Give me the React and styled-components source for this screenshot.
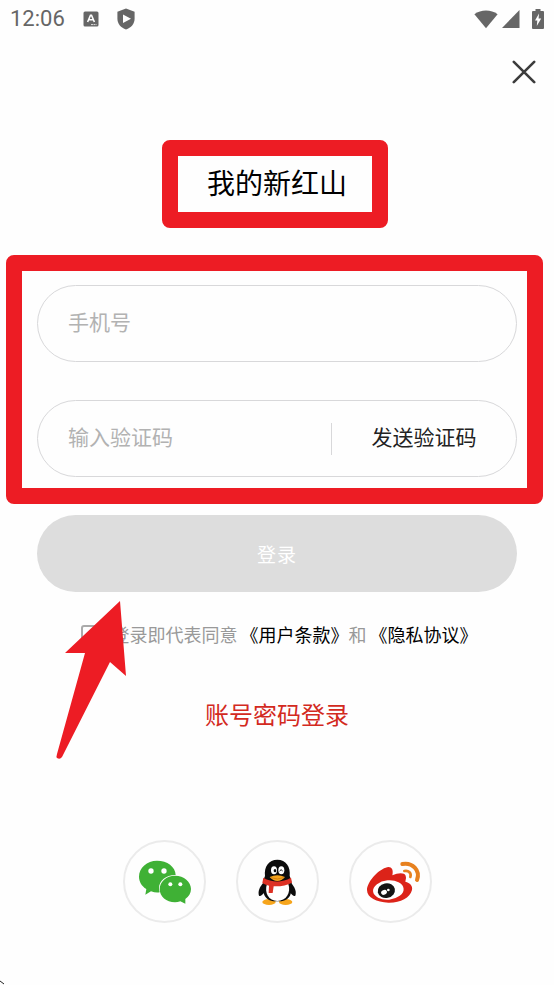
import React, { useState } from 'react';
import styled, { createGlobalStyle } from 'styled-components';

const RED = '#ed1c24';

const GlobalStyle = createGlobalStyle`
    * {
        box-sizing: border-box;
    }

    body {
        margin: 0;
        background: #fefefe;
        font-family: Roboto, 'Noto Sans CJK SC', sans-serif;
    }

    button, input {
        font-family: inherit;
    }
`;

const Page = styled.div`
    position: relative;
    min-height: 100vh;
    display: flex;
    flex-direction: column;
    overflow: hidden;
`;

const StatusBar = styled.div`
    height: 38px;
    padding: 0 10px;
    display: flex;
    align-items: center;
    justify-content: space-between;
    color: #666;
`;

const StatusGroup = styled.div`
    display: flex;
    align-items: center;
    gap: ${({ $gap }) => $gap}px;
`;

const Clock = styled.span`
    font-size: 22px;
    line-height: 26px;
`;

const Header = styled.header`
    display: flex;
    justify-content: flex-end;
    padding: 14px 10px 0;
`;

const CloseButton = styled.button`
    width: 40px;
    height: 40px;
    padding: 0;
    border: 0;
    background: none;
    display: flex;
    align-items: center;
    justify-content: center;
    cursor: pointer;
`;

const Title = styled.h1`
    position: relative;
    align-self: center;
    margin: 73px 0 0;
    font-size: 28px;
    line-height: 40px;
    font-weight: 400;
    color: #000;
`;

// red marker frame drawn over a block
const Highlight = styled.div`
    position: absolute;
    inset: ${({ $inset }) => $inset};
    border: 16px solid ${RED};
    border-radius: 8px;
    pointer-events: none;
`;

const Form = styled.form`
    margin: 80px 37px 0;
    display: flex;
    flex-direction: column;
    gap: 38px;
`;

const Fields = styled.div`
    position: relative;
    display: flex;
    flex-direction: column;
    gap: 38px;
`;

const Field = styled.div`
    height: 77px;
    display: flex;
    align-items: center;
    border: 1px solid #d8d8da;
    border-radius: 39px;
    overflow: hidden;
`;

const TextInput = styled.input`
    flex: 1;
    min-width: 0;
    height: 100%;
    padding: 0 30px 2px;
    border: 0;
    outline: 0;
    background: none;
    font-size: 21px;
    color: #222;

    &::placeholder {
        color: #b2b2b2;
        opacity: 1;
    }
`;

const SendCode = styled.button`
    flex: 0 0 185px;
    height: 32px;
    padding: 0 0 2px;
    border: 0;
    border-left: 1px solid #d8d8da;
    background: none;
    font-size: 21px;
    line-height: 30px;
    color: #222;
    cursor: pointer;
`;

const Submit = styled.button`
    height: 77px;
    border: 0;
    border-radius: 39px;
    background: #ddd;
    color: #fff;
    font-size: 19px;
    letter-spacing: 1px;
`;

const Terms = styled.div`
    position: relative;
    align-self: center;
    margin-top: 32px;
    padding-left: 4px;
    display: flex;
    align-items: center;
    font-size: 18px;
    line-height: 24px;
    color: #999;
    white-space: nowrap;
`;

const Checkbox = styled.input`
    appearance: none;
    width: 22px;
    height: 22px;
    margin: 0 9px 0 0;
    border: 2px solid #aaa;
    border-radius: 3px;

    &:checked {
        background: #999;
    }
`;

const TermsLink = styled.a`
    margin-left: 3px;
    color: #000;
    text-decoration: none;
`;

const ArrowSvg = styled.svg`
    position: absolute;
    left: -21px;
    top: -24px;
    pointer-events: none;
`;

const PasswordLogin = styled.a`
    align-self: center;
    margin-top: 50px;
    font-size: 24px;
    line-height: 36px;
    color: #d32a1e;
    text-decoration: none;
`;

const Social = styled.div`
    margin-top: 106px;
    display: flex;
    justify-content: center;
    gap: 30px;
`;

const SocialButton = styled.button`
    width: 83px;
    height: 83px;
    padding: 0;
    border: 2px solid #ebebeb;
    border-radius: 50%;
    background: none;
    display: flex;
    align-items: center;
    justify-content: center;
    cursor: pointer;
`;

const CornerMark = styled.svg`
    position: absolute;
    left: 0;
    bottom: 0;
`;

const BadgeIcon = () => (
    <svg width="16" height="16" viewBox="0 0 16 16">
        <rect x="0.5" y="0.5" width="15" height="15" rx="1.5" fill="#666" />
        <path d="M4.6 11 L7.5 4.2 H8.5 L11.4 11 M5.8 8.8 H10.2" fill="none" stroke="#fff" strokeWidth="1.6" />
        <path d="M8 13.6 H13.5" stroke="#ddd" strokeWidth="1" strokeDasharray="2 0.5" />
    </svg>
);

const ShieldIcon = () => (
    <svg width="18" height="22" viewBox="0 0 18 22">
        <path d="M9 0.4 L17.6 3.7 V10.5 C17.6 15.8 14 20 9 21.4 C4 20 0.4 15.8 0.4 10.5 V3.7 Z" fill="#666" />
        <path d="M6 6.5 L14 10.8 L6 15 Z" fill="#fff" />
    </svg>
);

const WifiIcon = () => (
    <svg width="24" height="19" viewBox="0 0 24 19">
        <path d="M0.4 4.2 C7 -0.8 17 -0.8 23.6 4.2 L12 18.2 Z" fill="#666" />
    </svg>
);

const SignalIcon = () => (
    <svg width="18" height="18" viewBox="0 0 18 18">
        <path d="M17.5 0 V18 H0 Z" fill="#666" />
    </svg>
);

const BatteryIcon = () => (
    <svg width="12" height="20" viewBox="0 0 12 20">
        <path d="M3.5 0 H8.5 V2 H11 Q12 2 12 3 V19 Q12 20 11 20 H1 Q0 20 0 19 V3 Q0 2 1 2 H3.5 Z" fill="#666" />
        <path d="M7 4.5 L3 11.5 H5.3 L4.8 17 L9.2 9.6 H6.6 Z" fill="#fff" />
    </svg>
);

const CloseIcon = () => (
    <svg width="24" height="24" viewBox="0 0 24 24">
        <path d="M1.8 1.8 L22.2 22.2 M22.2 1.8 L1.8 22.2" stroke="#3c3c3c" strokeWidth="2.6" strokeLinecap="round" />
    </svg>
);

const WechatIcon = () => (
    <svg width="79" height="79" viewBox="30 34 237 237">
        <path
            d="M126 90 C157 90 181 108 182 133 C155 132 132 149 132 173 Q132 180 134 185 Q122 187 108 182 L91 192 L94 175 C80 166 72 153 72 138 C72 111 96 90 126 90 Z"
            fill="#3fb135"
        />
        <path
            d="M180 135 C207 135 228 153 228 175 C228 188 221 198 211 205 L211 219 L196 212 Q188 215 180 215 C154 215 134 197 134 175 C134 153 154 135 180 135 Z"
            fill="#3fb135"
        />
        <circle cx="108" cy="121" r="8" fill="#fff" />
        <circle cx="147" cy="121" r="8" fill="#fff" />
        <circle cx="166" cy="161" r="6" fill="#fff" />
        <circle cx="196" cy="161" r="6" fill="#fff" />
    </svg>
);

const QqIcon = () => (
    <svg width="79" height="79" viewBox="30 34 237 237">
        <ellipse cx="123" cy="214" rx="20" ry="9" fill="#f6a51c" />
        <ellipse cx="173" cy="214" rx="20" ry="9" fill="#f6a51c" />
        <path d="M106 156 C94 170 89 183 93 195 Q98 200 110 184 Z" fill="#0c0c0c" />
        <path d="M189 156 C201 170 206 183 202 195 Q197 200 185 184 Z" fill="#0c0c0c" />
        <path
            d="M148 87 C174 87 188 108 185 136 C193 152 193 181 186 195 C178 209 166 212 148 212 C130 212 118 209 110 195 C103 181 103 152 111 136 C108 108 122 87 148 87 Z"
            fill="#0c0c0c"
        />
        <path d="M117 160 H181 C190 186 174 211 148 211 C122 211 108 186 117 160 Z" fill="#fff" />
        <path d="M106 141 Q147 164 189 141 L192 156 Q170 168 137 167 L134 187 H122 L123 165 Q110 162 103 157 Z" fill="#dd3124" />
        <ellipse cx="138" cy="119" rx="9" ry="12" fill="#fff" />
        <ellipse cx="160" cy="119" rx="9" ry="12" fill="#fff" />
        <ellipse cx="141" cy="120" rx="4" ry="5" fill="#0c0c0c" />
        <path d="M155 121 Q159 113 164 121" fill="none" stroke="#0c0c0c" strokeWidth="3" />
        <path d="M125 139 Q148 129 171 139 Q161 151 148 151 Q135 151 125 139 Z" fill="#f6a51c" />
        <path d="M129 141 Q148 149 167 141" fill="none" stroke="#c8710c" strokeWidth="2" />
    </svg>
);

const WeiboIcon = () => (
    <svg width="79" height="79" viewBox="30 34 237 237">
        <path
            d="M134 111 C148 105 159 113 154 134 C171 126 190 125 194 135 Q197 142 193 153 C207 156 216 166 213 178 C207 202 177 217 142 216 C107 215 78 201 78 178 C78 155 109 119 134 111 Z"
            fill="#dc2319"
        />
        <ellipse cx="142" cy="178" rx="46" ry="29" transform="rotate(-5 142 178)" fill="#fff" />
        <ellipse cx="136" cy="180" rx="26" ry="22" transform="rotate(-12 136 180)" fill="#141414" />
        <ellipse cx="129" cy="185" rx="9" ry="7" transform="rotate(-25 129 185)" fill="#fff" />
        <circle cx="142" cy="178" r="4" fill="#fff" />
        <path d="M184 100 C214 94 239 119 228 148" fill="none" stroke="#e7811f" strokeWidth="12" strokeLinecap="round" />
        <path d="M190 121 C203 118 212 128 208 139" fill="none" stroke="#e7811f" strokeWidth="8" strokeLinecap="round" />
    </svg>
);

const Arrow = () => (
    <ArrowSvg width="72" height="162" viewBox="0 0 72 162">
        <path d="M64 1 L70 76 L54 62 L6 157 Q4 160 1 158 Q0 157 1 154 L29 53 L9 53 Z" fill={RED} />
    </ArrowSvg>
);

const socials = [
    { label: '微信', Icon: WechatIcon },
    { label: 'QQ', Icon: QqIcon },
    { label: '微博', Icon: WeiboIcon },
];

const App = () => {
    const [phone, setPhone] = useState('');
    const [code, setCode] = useState('');
    const [agreed, setAgreed] = useState(false);

    return (
        <Page>
            <GlobalStyle />
            <StatusBar>
                <StatusGroup $gap={18}>
                    <Clock>12:06</Clock>
                    <BadgeIcon />
                    <ShieldIcon />
                </StatusGroup>
                <StatusGroup $gap={12}>
                    <StatusGroup $gap={4}>
                        <WifiIcon />
                        <SignalIcon />
                    </StatusGroup>
                    <BatteryIcon />
                </StatusGroup>
            </StatusBar>
            <Header>
                <CloseButton type="button" aria-label="关闭">
                    <CloseIcon />
                </CloseButton>
            </Header>
            <Title>
                我的新红山
                <Highlight $inset="-25px -41px -23px -45px" />
            </Title>
            <Form onSubmit={(e) => e.preventDefault()}>
                <Fields>
                    <Field>
                        <TextInput
                            type="tel"
                            aria-label="手机号"
                            placeholder="手机号"
                            value={phone}
                            onChange={(e) => setPhone(e.target.value)}
                        />
                    </Field>
                    <Field>
                        <TextInput
                            type="text"
                            aria-label="输入验证码"
                            placeholder="输入验证码"
                            value={code}
                            onChange={(e) => setCode(e.target.value)}
                        />
                        <SendCode type="button">发送验证码</SendCode>
                    </Field>
                    <Highlight $inset="-30px -26px -27px -31px" />
                </Fields>
                <Submit type="submit">登录</Submit>
            </Form>
            <Terms>
                <Checkbox
                    id="agree"
                    type="checkbox"
                    checked={agreed}
                    onChange={(e) => setAgreed(e.target.checked)}
                />
                <label htmlFor="agree">登录即代表同意</label>
                <TermsLink href="#terms">《用户条款》</TermsLink>
                <span>和</span>
                <TermsLink href="#privacy">《隐私协议》</TermsLink>
                <Arrow />
            </Terms>
            <PasswordLogin href="#password">账号密码登录</PasswordLogin>
            <Social>
                {socials.map(({ label, Icon }) => (
                    <SocialButton key={label} type="button" aria-label={label}>
                        <Icon />
                    </SocialButton>
                ))}
            </Social>
            <CornerMark width="4" height="5" viewBox="0 0 4 5">
                <path d="M0 1 L4 4" stroke="#222" strokeWidth="1" />
            </CornerMark>
        </Page>
    );
};

export default App;
